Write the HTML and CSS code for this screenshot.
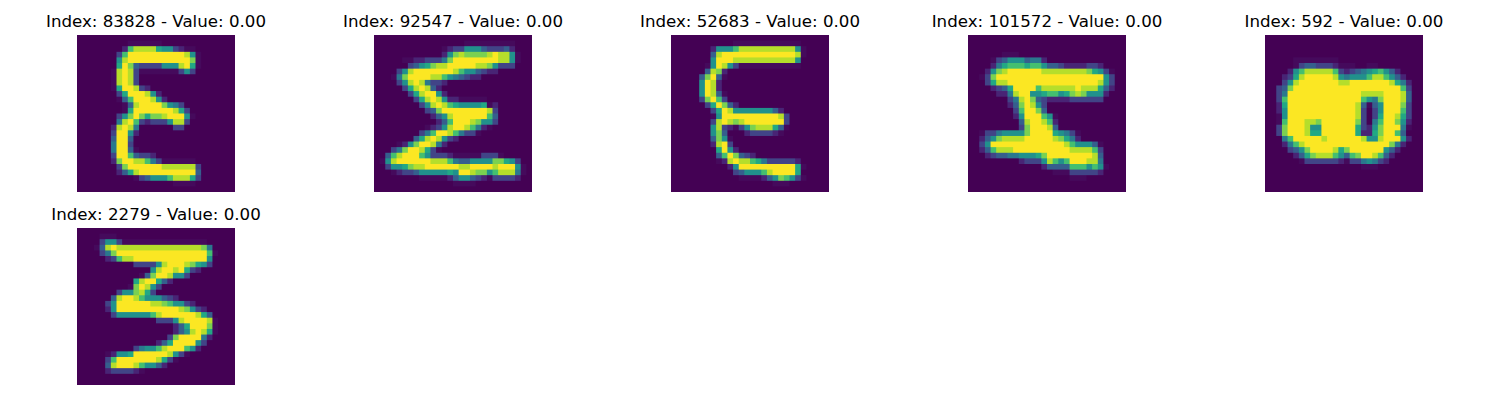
FILE: index.html
```html
<!DOCTYPE html>
<html lang="en">
<head>
<meta charset="utf-8">
<title>Samples</title>
<link rel="stylesheet" href="styles.css">
</head>
<body>
<main class="figure">
  <figure class="panel"><figcaption class="panel-title">Index: 83828 - Value: 0.00</figcaption><canvas class="digit" data-sample="83828" width="158" height="157"></canvas></figure>
  <figure class="panel"><figcaption class="panel-title">Index: 92547 - Value: 0.00</figcaption><canvas class="digit" data-sample="92547" width="158" height="157"></canvas></figure>
  <figure class="panel"><figcaption class="panel-title">Index: 52683 - Value: 0.00</figcaption><canvas class="digit" data-sample="52683" width="158" height="157"></canvas></figure>
  <figure class="panel"><figcaption class="panel-title">Index: 101572 - Value: 0.00</figcaption><canvas class="digit" data-sample="101572" width="158" height="157"></canvas></figure>
  <figure class="panel"><figcaption class="panel-title">Index: 592 - Value: 0.00</figcaption><canvas class="digit" data-sample="592" width="158" height="157"></canvas></figure>
  <figure class="panel"><figcaption class="panel-title">Index: 2279 - Value: 0.00</figcaption><canvas class="digit" data-sample="2279" width="158" height="157"></canvas></figure>
</main>
<script src="digits.js"></script>
</body>
</html>
```
FILE: styles.css
```css
html, body {
  margin: 0;
  background: #ffffff;
}

.figure {
  display: grid;
  grid-template-columns: repeat(5, 158px);
  column-gap: 139px;
  row-gap: 13px;
  padding: 12px 0 0 77px;
}

.panel {
  margin: 0;
  display: flex;
  flex-direction: column;
}

.panel-title {
  display: flex;
  justify-content: center;
  height: 23px;
  font-family: "DejaVu Sans", sans-serif;
  font-size: 16.67px;
  line-height: 20px;
  color: #000000;
  white-space: nowrap;
}

.digit {
  display: block;
  width: 158px;
  height: 157px;
}
```
FILE: digits.js
```js
var SAMPLES = {
"83828": [
"",
".........,,,,,,",
"........17999965521,,",
".......27aaaaaaaaaa95,",
".......59aaaaaaaaaaa8,",
".......6a8322225559a6,",
"......,9a92,,,,,,,252",
"......,9a92",
"......,9a92",
"......,6aa921",
".......26aaa951",
".......,37aaa951",
"........,39aaaa8542",
"........,6aaaaaaa962",
".......258a86889aaa5,",
".......49a7212225992",
"......19a94......22",
"......2aa51",
"......3aa3",
"......4aa2",
"......4aa3,",
"......2aa73221",
"......18aa99742,,,,,,",
".......28aaaaaa9999992",
".......1369aaaaaaaaaa3",
"..........,23555799962",
".................,,,,",
""],
"92547": [
"",
"................,,,,,,,,,",
"............,122555322231",
"............158988889a995,",
".....,,1122248aaaaaaaa995,",
"......2356899aaaaa9985222",
"....259aaaaaaa97553211",
"...,48aaaa997543211",
"....259a94221",
".....269a931",
"......269aa51",
".......269a9511,,,,,",
"........259a97655556,1",
".........238aaaaaaaa92",
"..........1359aaaaaa73",
"...........137aaa98552",
".........,1259aa9741,",
"........247aa97422,",
".......369a9521",
"....,158aa941",
"...248aa962,",
"..379aaa752221,,,,,222,",
".,59aaaaaa9997433555588652",
"..2556899aaaaaa99aaaa9aaa5,",
"...,12235555565aa988579994,",
"........,,,,,1355321,22221",
"..............,,,,",
""],
"52683": [
"",
"...........,,,,,,,,,,,,",
".......1555799999999995,",
".......39aaaaaaaaaaaaa9,",
".......5aaa999999999995",
"......,5a952,,,,,,,,,,,",
"......3981",
".....38a3,",
".....5a91",
".....5a91",
".....5a93,",
".....28a72",
"......26a831",
".......26a9555555531",
".......,5aaaaaaaaaa92",
".......29a989aaaaaaa2",
".......5921,25899963,",
".......583...122221,",
".......385,",
".......19a2",
"........6a51",
"........37a8321",
"........,19a99764222221",
"..........15aaaaaaaaaa6,",
"...........2355579aaaa6",
"............,,,,1358752,",
"..................,,,",
""],
"101572": [
"",
"",
"",
"......,,,",
"....,235553441",
"....14677767753321111221",
"...1589aaaaaa999999998652,",
"..,28aaaaaaaaaaaaaaaaaaa52",
"...2699aaaaaaaaaaaaaaaa952",
"....1236aaaa7999999a999631",
".....1149aa55677568985551",
".......249a8321111222222",
".......138a952",
"........27aa83",
"........15aaa75,",
".........39aa971",
".........28aaa93",
"..,22455558aaaa6542,",
"..13589999aaaaa98641",
"..25aaaaaaaaaaaaa975553,",
"..137999aaaaaaaaaa999972",
"...12334455568aaaaaaaa93",
".........122259757aaa994",
".............13333777575,",
"...............,,,222221",
"..................,,,",
"",
""],
"592": [
"",
"",
"",
"",
".....,,,,,,,,",
".....,2332221,,,..,,",
"....15799999721234567531",
"...1269aaaaa9545557997531",
"...259aaaaaaa99aaaaaaa9641",
"..238aaaaaaaaaaaaaaaaaaa72",
"..24aaaaaaaaaaaaa9999aaa93",
"..27aaaaaaaaaaaaa7548aaa93",
"..16aaaaaaaaaaaa93,35aaa82",
"..15aaaaaaaaaaaa92.25aaa72",
"..,5aaaaaaaaaaaa92.26aa962",
"..,7aaa998aaaaaa82.47aa851",
"..28aaa955aaaaaa62158aaa4,",
"..28aaa966aaaaaa61168aa73",
"...47aaaaa9aaaaaa9559aaa51",
"...1479aaaaaaaaaaaaaaa841",
"....2358aaaa968aaaaaa531",
".....136899975378aa9731",
"......,2222221,2245421",
".................,,,",
"",
"",
"",
""],
"2279": [
"",
"....,,,",
"....2552,,,,,,,,,,,,,,,",
"...,39a99999999999999984",
"....248aaaaaaaaaaaaaaaa7,",
".....12799aaaaaaaaaaaaa5",
"..........222259aaa98652",
".............59aa9a621",
"...........,38aa9552",
"..........69aa631",
".........,8a952",
".......2558962",
"......39aa97555321",
".....25aaaaaa99875521",
".....15aaaaaaaaaaa98521",
"......255555579aaaaaa963",
"..............22259aaaa9,",
".................136aaa8,",
".................1359a96,",
"................28aaaa41",
"..............136aaaa52",
"..........245579aaa751",
".....,1556aaaaaa952,",
".....27aaaaaaa962,",
".....39aaa975531",
".....122221,",
"",
""]
};

var VIRIDIS = {
  ".": "#440154", ",": "#450a5c",
  "1": "#482475", "2": "#414487", "3": "#355f8d", "4": "#2a788e", "5": "#21918c",
  "6": "#22a884", "7": "#44bf70", "8": "#7ad151", "9": "#b5de2b", "a": "#fbe723"
};

function drawDigit(canvas) {
  var rows = SAMPLES[canvas.dataset.sample];
  var scale = 6;
  var source = document.createElement("canvas");
  source.width = source.height = 28 * scale;
  var sctx = source.getContext("2d");
  for (var r = 0; r < 28; r++) {
    var row = rows[r] || "";
    for (var c = 0; c < 28; c++) {
      sctx.fillStyle = VIRIDIS[row.charAt(c) || "."] || VIRIDIS["."];
      sctx.fillRect(c * scale, r * scale, scale, scale);
    }
  }
  var ctx = canvas.getContext("2d");
  ctx.imageSmoothingEnabled = true;
  ctx.imageSmoothingQuality = "high";
  ctx.drawImage(source, 0, 0, canvas.width, canvas.height);
}

Array.prototype.forEach.call(document.querySelectorAll(".digit"), drawDigit);
```
